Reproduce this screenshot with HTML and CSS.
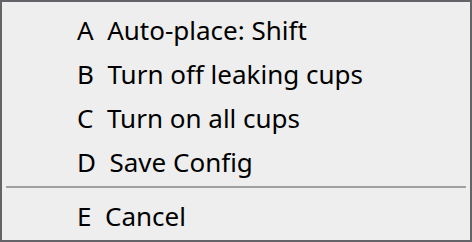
FILE: index.html
```html
<!DOCTYPE html>
<html lang="en">
<head>
  <meta charset="UTF-8">
  <title>Menu</title>
  <link rel="stylesheet" href="styles.css">
</head>
<body>
  <div class="menu">
    <div class="item">A  Auto-place: Shift</div>
    <div class="item">B  Turn off leaking cups</div>
    <div class="item">C  Turn on all cups</div>
    <div class="item">D  Save Config</div>
    <div class="sep"></div>
    <div class="item">E  Cancel</div>
  </div>
</body>
</html>
```

FILE: styles.css
```css
html, body {
  margin: 0;
  padding: 0;
}

body {
  font-family: "Noto Sans", "Open Sans", sans-serif;
  background: #eeeeee;
}

.menu {
  box-sizing: border-box;
  width: 472px;
  height: 242px;
  border: 2px solid #646468;
  background: #eeeeee;
  padding: 6px 4px 0 4px;
  overflow: hidden;
}

.item {
  height: 44px;
  line-height: 44px;
  padding-left: 71px;
  font-size: 26px;
  color: #000;
  white-space: pre;
}

.sep {
  height: 2px;
  background: #a0a0a0;
  margin: 2px 0 6px 0;
}
```
